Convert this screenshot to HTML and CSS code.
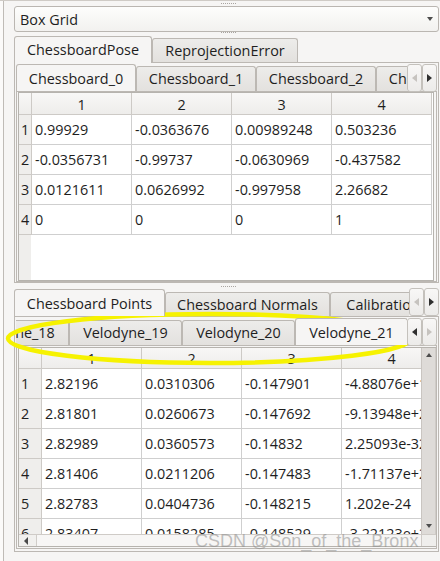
FILE: index.html
```html
<!DOCTYPE html>
<html>
<head>
<meta charset="utf-8">
<title>Box Grid</title>
<link rel="stylesheet" href="styles.css">
</head>
<body>
<div class="window">
  <div class="dock">
    <div class="grip grip-top"></div>
    <div class="combo"><span class="combo-text">Box Grid</span><span class="combo-arrow"></span></div>
    <div class="grip grip-mid"></div>

    <div class="tabwidget tw1">
      <div class="tabbar bar-o1">
        <div class="tab active w-pose">ChessboardPose</div>
        <div class="tab w-reproj">ReprojectionError</div>
      </div>
      <div class="pane pane1">
        <div class="tabbar bar-i">
          <div class="tabstrip strip-i1">
            <div class="tab active w-cb">Chessboard_0</div>
            <div class="tab w-cb">Chessboard_1</div>
            <div class="tab w-cb">Chessboard_2</div>
            <div class="tab w-cb">Chessboard_3</div>
          </div>
          <div class="sbtn"><span class="tri-l dim"></span></div>
          <div class="sbtn"><span class="tri-r"></span></div>
        </div>
        <div class="ipane ipane1">
          <div class="table t1">
            <div class="grid g1">
              <div class="hc"></div><div class="hc">1</div><div class="hc">2</div><div class="hc">3</div><div class="hc">4</div>
              <div class="rh">1</div><div class="c">0.99929</div><div class="c">-0.0363676</div><div class="c">0.00989248</div><div class="c">0.503236</div>
              <div class="rh">2</div><div class="c">-0.0356731</div><div class="c">-0.99737</div><div class="c">-0.0630969</div><div class="c">-0.437582</div>
              <div class="rh">3</div><div class="c">0.0121611</div><div class="c">0.0626992</div><div class="c">-0.997958</div><div class="c">2.26682</div>
              <div class="rh">4</div><div class="c">0</div><div class="c">0</div><div class="c">0</div><div class="c">1</div>
            </div>
            <div class="filler"></div>
          </div>
        </div>
      </div>
    </div>

    <div class="grip grip-low"></div>

    <div class="tabwidget tw2">
      <div class="tabbar bar-o2">
        <div class="tabstrip strip-o2">
          <div class="tab active w-pts">Chessboard Points</div>
          <div class="tab w-nrm">Chessboard Normals</div>
          <div class="tab w-cal">Calibration</div>
        </div>
        <div class="sbtn sbtn-o"><span class="tri-l dim"></span></div>
        <div class="sbtn sbtn-o"><span class="tri-r"></span></div>
      </div>
      <div class="pane pane2">
        <div class="tabbar bar-i">
          <div class="tabstrip strip-i2">
            <div class="tab w-vel first-vel">Velodyne_18</div>
            <div class="tab w-vel">Velodyne_19</div>
            <div class="tab w-vel">Velodyne_20</div>
            <div class="tab active w-vel">Velodyne_21</div>
          </div>
          <div class="sbtn"><span class="tri-l"></span></div>
          <div class="sbtn"><span class="tri-r dim"></span></div>
        </div>
        <div class="ipane ipane2">
          <div class="table t2">
            <div class="viewport">
              <div class="grid g2">
                <div class="hc"></div><div class="hc">1</div><div class="hc">2</div><div class="hc">3</div><div class="hc">4</div>
                <div class="rh">1</div><div class="c">2.82196</div><div class="c">0.0310306</div><div class="c">-0.147901</div><div class="c">-4.88076e+18</div>
                <div class="rh">2</div><div class="c">2.81801</div><div class="c">0.0260673</div><div class="c">-0.147692</div><div class="c">-9.13948e+20</div>
                <div class="rh">3</div><div class="c">2.82989</div><div class="c">0.0360573</div><div class="c">-0.14832</div><div class="c">2.25093e-32</div>
                <div class="rh">4</div><div class="c">2.81406</div><div class="c">0.0211206</div><div class="c">-0.147483</div><div class="c">-1.71137e+24</div>
                <div class="rh">5</div><div class="c">2.82783</div><div class="c">0.0404736</div><div class="c">-0.148215</div><div class="c">1.202e-24</div>
                <div class="rh">6</div><div class="c">2.83407</div><div class="c">0.0158285</div><div class="c">-0.148529</div><div class="c">-3.22123e+23</div>
              </div>
            </div>
            <div class="vscroll"><span class="tri-u"></span><span class="tri-d"></span></div>
            <div class="hscroll"><span class="tri-l small"></span><span class="hslider"></span></div>
            <div class="corner"></div>
          </div>
        </div>
      </div>
    </div>
  </div>

  <svg class="annotation" width="440" height="561" viewBox="0 0 440 561">
    <ellipse cx="209.5" cy="337.5" rx="201.5" ry="24.5" fill="none" stroke="#f6f200" stroke-width="4.5"/>
  </svg>
  <div class="watermark">CSDN @Son_of_the_Bronx</div>
</div>
</body>
</html>
```

FILE: styles.css
```css
* { box-sizing: border-box; }
html, body { margin: 0; padding: 0; }
body {
  width: 440px;
  height: 561px;
  overflow: hidden;
  background: #fbfaf9;
  font-family: "Open Sans", "DejaVu Sans", sans-serif;
  font-size: 14.4px;
  color: #1e1e1e;
}
.window {
  position: relative;
  width: 440px;
  height: 561px;
  border-top: 1px solid #cfcbc6;
  padding-left: 3px;
}
.dock {
  height: 100%;
  border-left: 1px solid #bfbbb6;
  background: #f6f5f4;
  padding-left: 10px;
  display: flex;
  flex-direction: column;
}
.grip {
  flex: none;
  height: 1px;
  width: 15px;
  margin-left: 207px;
  background: repeating-linear-gradient(90deg, #a9a5a1 0 1px, transparent 1px 2px);
}
.grip-top { margin-top: 2px; margin-bottom: 2px; }
.grip-mid { margin-bottom: 3px; }
.grip-low { margin-top: 3px; margin-bottom: 2px; }

/* combo */
.combo {
  flex: none;
  width: 425px;
  height: 26px;
  border: 1px solid #bab6b1;
  border-radius: 3px;
  background: linear-gradient(#fdfdfc, #f2f1ef);
  display: flex;
  align-items: center;
  justify-content: space-between;
  padding: 0 5px 0 5px;
}
.combo-arrow {
  width: 0; height: 0;
  border-left: 3.5px solid transparent;
  border-right: 3.5px solid transparent;
  border-top: 4px solid #4d4d4d;
}

/* tabs */
.tabwidget { flex: none; width: 425px; display: flex; flex-direction: column; }
.tw1 { height: 247px; }
.tw2 { height: 263px; }
.tabbar { flex: none; display: flex; align-items: flex-end; }
.bar-o1 { height: 26px; }
.bar-o2 { height: 27px; }
.bar-i { height: 27px; }
.tabstrip { display: flex; align-items: flex-end; overflow: hidden; height: 100%; flex: none; }
.strip-i1 { width: 391px; }
.strip-i2 { width: 391px; }
.strip-o2 { width: 395px; }
.tab {
  flex: none;
  display: flex;
  align-items: center;
  justify-content: center;
  white-space: nowrap;
  border: 1px solid #bcb8b3;
  border-bottom: none;
  border-radius: 3px 3px 0 0;
  background: linear-gradient(#edecea, #e3e1de);
  height: 24px;
  padding-bottom: 1px;
}
.bar-i .tab { height: 25px; }
.bar-o2 .tab { height: 24px; }
.tab.active {
  position: relative;
  z-index: 1;
  background: #f6f5f4;
  height: 27px;
  margin-bottom: -1px;
  padding-bottom: 1px;
}
.bar-i .tab.active { height: 28px; }
.bar-o2 .tab.active { height: 28px; }
.w-pose { width: 138px; }
.w-reproj { width: 146px; }
.w-cb { width: 120px; }
.w-pts { width: 151px; }
.w-nrm { width: 165px; }
.w-cal { width: 106px; }
.w-vel { width: 113px; }
.first-vel { margin-left: -60px; }

.sbtn {
  flex: none;
  width: 15px;
  height: 28px;
  margin-bottom: -1px;
  position: relative;
  z-index: 1;
  border: 1px solid #c4c1bc;
  border-radius: 3px;
  background: linear-gradient(#f8f7f6, #ecebe9);
  display: flex;
  align-items: center;
  justify-content: center;
}
.sbtn-o { height: 28px; margin-bottom: 0; }
.tri-l, .tri-r { width: 0; height: 0; border-top: 4.5px solid transparent; border-bottom: 4.5px solid transparent; }
.tri-l { border-right: 5px solid #2f2f2f; }
.tri-r { border-left: 5px solid #2f2f2f; }
.tri-l.dim { border-right-color: #c6c3bf; }
.tri-r.dim { border-left-color: #c6c3bf; }
.tri-l.small { border-top-width: 4px; border-bottom-width: 4px; border-right-width: 4px; border-right-color: #4a4a4a; }

/* panes */
.pane { border: 1px solid #bcb8b3; background: #f6f5f4; display: flex; flex-direction: column; }
.pane1 { height: 221px; padding: 1px 1px 0 1px; }
.pane2 { height: 236px; padding: 1px 1px 2px 1px; }
.ipane { flex: none; border: 1px solid #bcb8b3; background: #f6f5f4; }
.ipane1 { height: 191px; padding: 0 1px; }
.ipane2 { height: 204px; padding: 1px 1px 0 1px; }

/* tables */
.table { background: #fff; border: 1px solid #b6b3ae; }
.t1 { width: 416px; height: 189px; display: flex; flex-direction: column; }
.grid { display: grid; }
.g1 { grid-template-columns: 13px repeat(4, 100px); grid-template-rows: 22px repeat(4, 30px); }
.g2 { grid-template-columns: 23px repeat(4, 100px); grid-template-rows: 21px repeat(6, 30px); width: 423px; }
.hc {
  background: linear-gradient(#f8f7f6, #eeedeb);
  border-right: 1px solid #cdcac6;
  border-bottom: 1px solid #cdcac6;
  display: flex;
  align-items: center;
  justify-content: center;
  padding-top: 1px;
}
.rh {
  background: #efeeec;
  border-right: 1px solid #cdcac6;
  border-bottom: 1px solid #cdcac6;
  display: flex;
  align-items: center;
  padding-left: 2px;
}
.c {
  border-right: 1px solid #cfcfcf;
  border-bottom: 1px solid #cfcfcf;
  display: flex;
  align-items: center;
  padding-left: 3px;
  white-space: nowrap;
  overflow: hidden;
}
.filler { flex: 1; background: linear-gradient(90deg, #efeeec 12px, #ffffff 12px); }

.t2 {
  width: 418px;
  height: 200px;
  border-right: none;
  display: grid;
  grid-template-columns: 402px 15px;
  grid-template-rows: 186px 12px;
}
.viewport { overflow: hidden; }
.vscroll {
  background: #dedbd8;
  border-left: 1px solid #c9c5c1;
  border-right: 1px solid #cfcbc7;
  display: flex;
  flex-direction: column;
  align-items: center;
  justify-content: space-between;
  padding: 5px 0 6px;
}
.tri-u, .tri-d { width: 0; height: 0; border-left: 3.5px solid transparent; border-right: 3.5px solid transparent; }
.tri-u { border-bottom: 4px solid #4d4d4d; }
.tri-d { border-top: 4px solid #4d4d4d; }
.hscroll {
  background: #f1f0ee;
  border-top: 1px solid #cfcbc7;
  display: flex;
  align-items: center;
  padding-left: 5px;
}
.hslider { flex: 1; height: 100%; margin-left: 8px; border-left: 1px solid #d0cdc9; background: #f7f6f5; }
.corner { background: #efeeec; border-top: 1px solid #cfcbc7; border-left: 1px solid #cfcbc7; }

/* overlays */
.annotation { position: absolute; left: 0; top: 0; pointer-events: none; }
.watermark {
  position: absolute;
  left: 195px;
  top: 530px;
  font-family: "Liberation Sans", Arial, sans-serif;
  font-size: 18px;
  color: rgba(140, 140, 140, 0.55);
  white-space: nowrap;
  pointer-events: none;
}
```
